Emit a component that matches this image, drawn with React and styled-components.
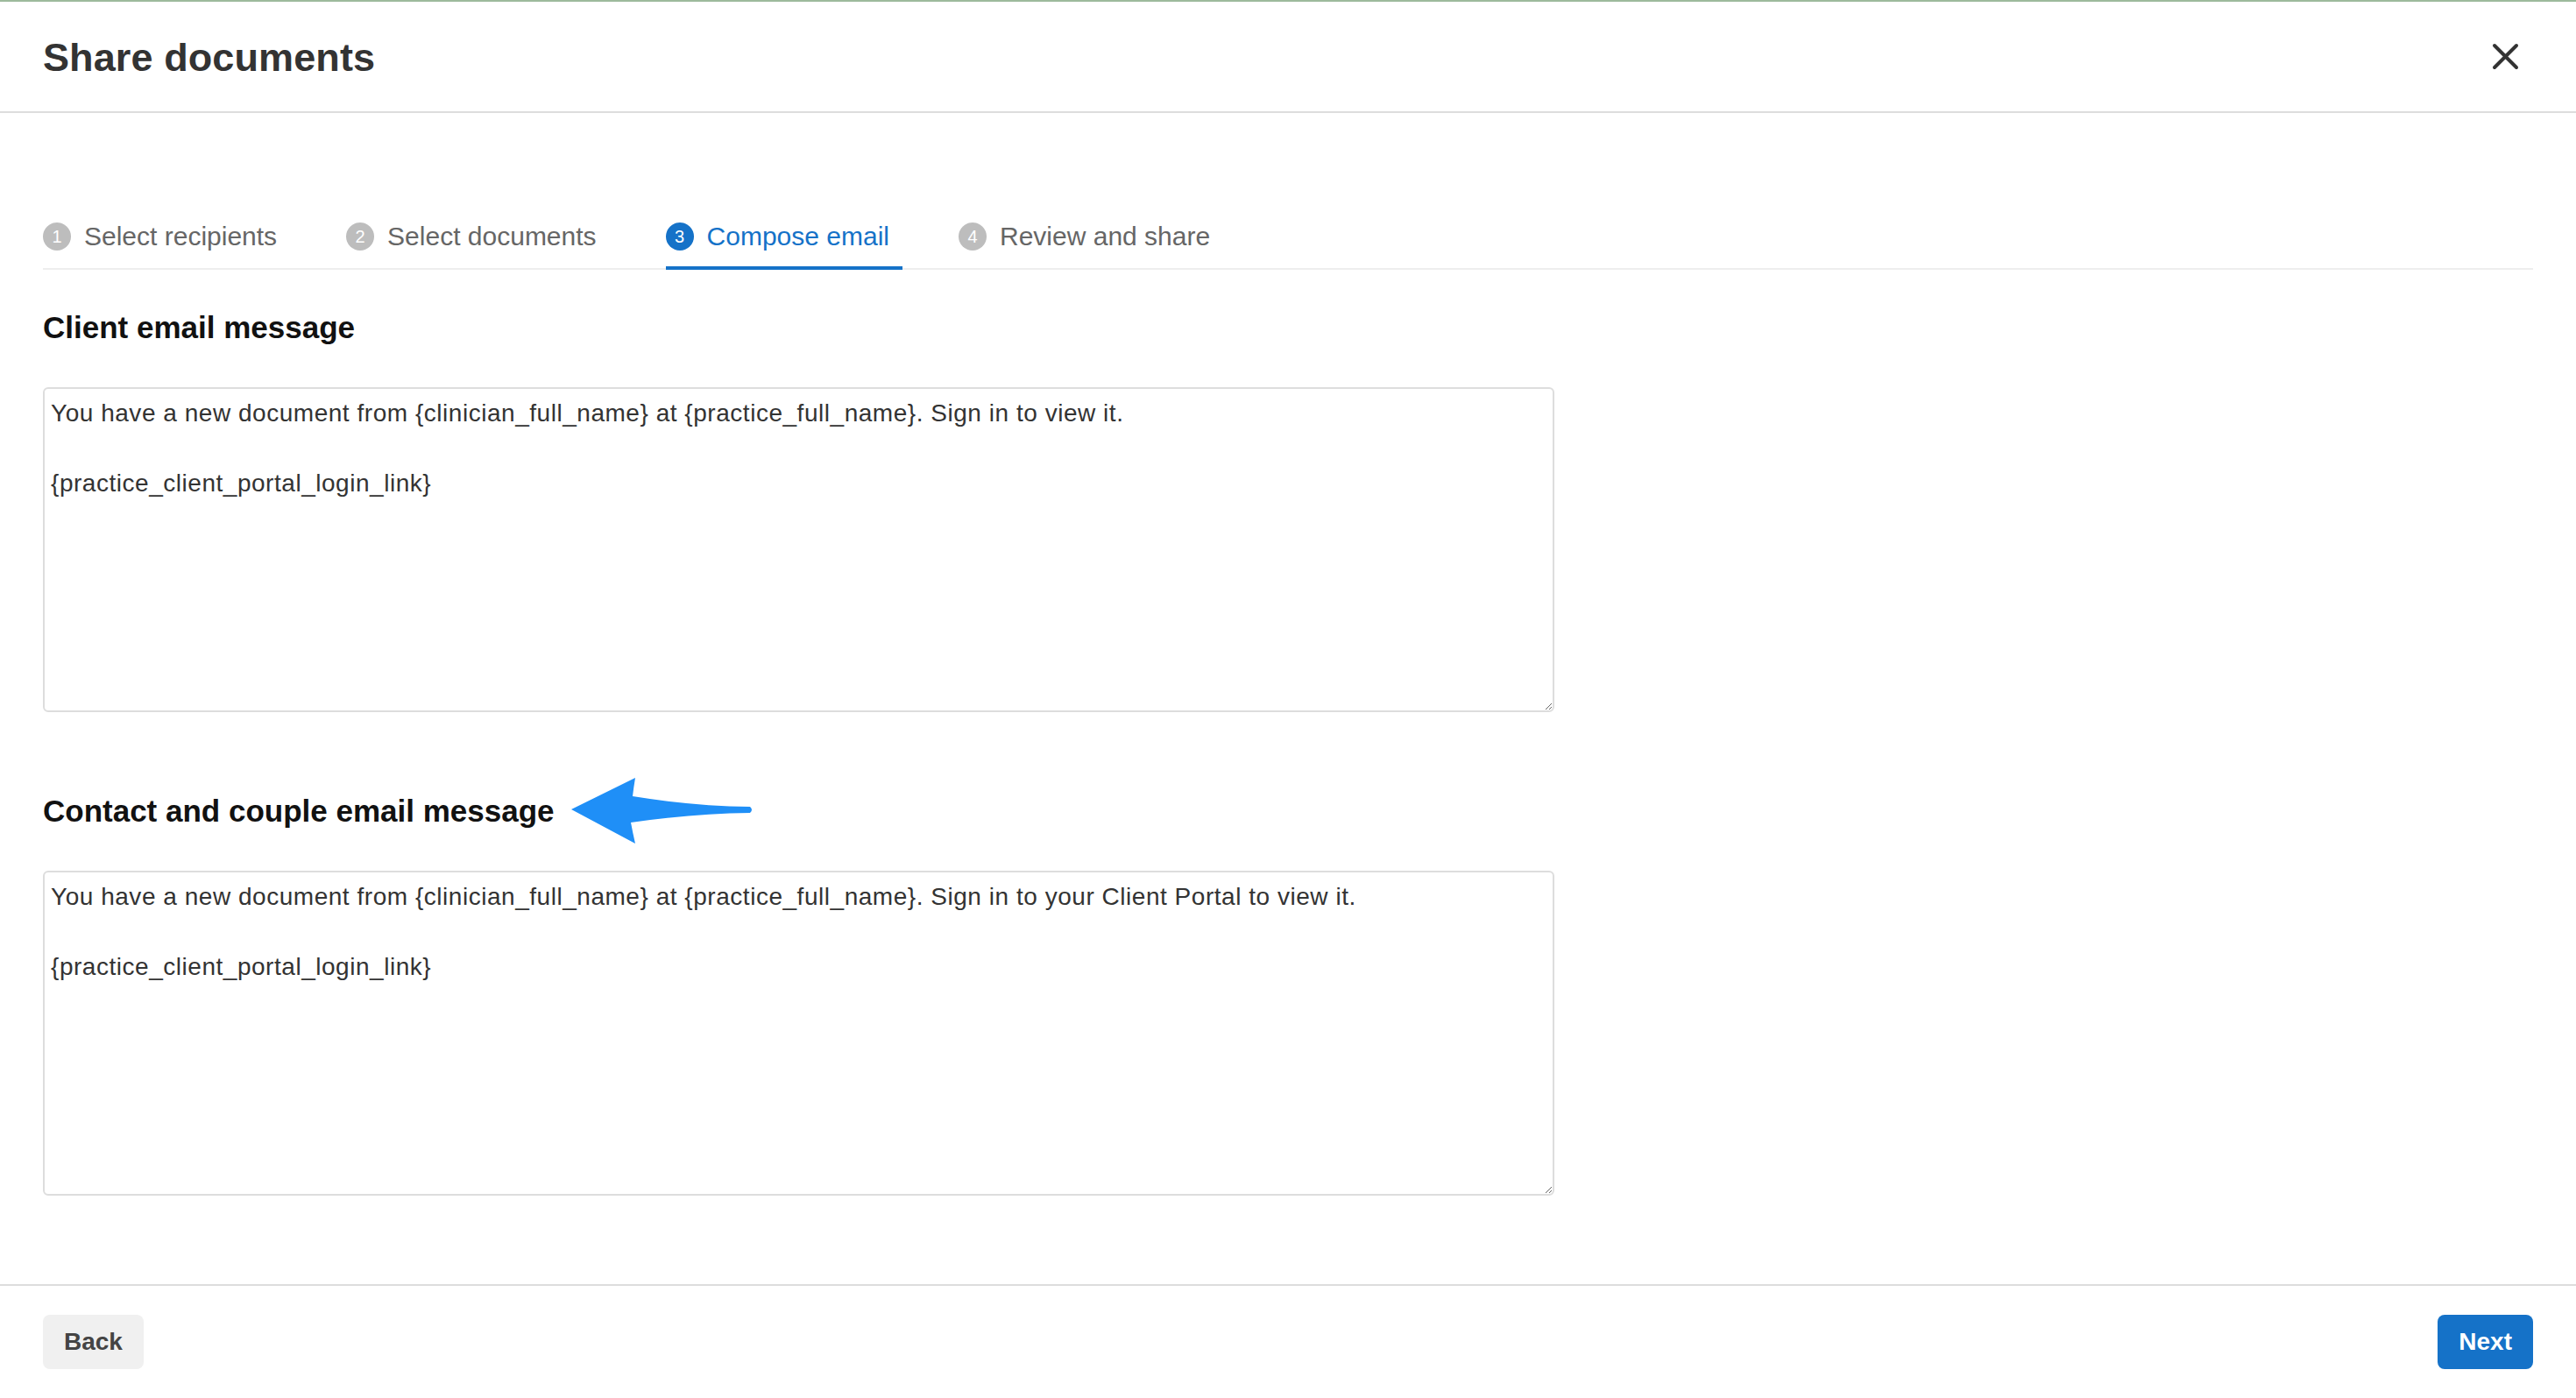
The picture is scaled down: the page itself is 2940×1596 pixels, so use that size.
import styled, { createGlobalStyle } from "styled-components"

const GlobalStyle = createGlobalStyle`
html, body {
    margin: 0;
    padding: 0;
    background: #ffffff;
}
body {
    font-family: 'Liberation Sans', Arial, sans-serif;
}
* {
    box-sizing: border-box;
}
`

const steps = ["Select recipients", "Select documents", "Compose email", "Review and share"]

const clientMessage = `You have a new document from {clinician_full_name} at {practice_full_name}. Sign in to view it.

{practice_client_portal_login_link}`

const contactMessage = `You have a new document from {clinician_full_name} at {practice_full_name}. Sign in to your Client Portal to view it.

{practice_client_portal_login_link}`

function CloseIcon() {
    return (
        <svg width="31" height="31" viewBox="0 0 31 31" fill="none">
            <path d="M3 3 L28 28 M28 3 L3 28" stroke="#333333" strokeWidth="4" strokeLinecap="round" />
        </svg>
    )
}

function PointerArrow() {
    // hand-drawn style annotation arrow, pointing left at the heading
    return (
        <svg width="212" height="80" viewBox="0 0 212 80">
            <path
                d="M3 38 L76 2 Q74 14 73 23 Q140 34 207 35 Q211 38.5 207 42 Q140 43 71 53 Q73 64 76 77 Z"
                fill="#1f8ff7"
            />
        </svg>
    )
}

export default function App() {
    const active = 2

    return (
        <StyledScreen>
            <GlobalStyle />

            <StyledHeader>
                <h1>Share documents</h1>
                <CloseButton aria-label="Close">
                    <CloseIcon />
                </CloseButton>
            </StyledHeader>

            <StyledBody>
                <StyledTabs>
                    {steps.map((label, idx) => (
                        <Tab key={label} $active={idx === active}>
                            <StepNumber $active={idx === active}>{idx + 1}</StepNumber>
                            <span>{label}</span>
                        </Tab>
                    ))}
                </StyledTabs>

                <SectionTitle $top={45}>Client email message</SectionTitle>
                <MessageBox defaultValue={clientMessage} />

                <SectionTitle $top={92}>
                    Contact and couple email message
                    <PointerArrow />
                </SectionTitle>
                <MessageBox defaultValue={contactMessage} />
            </StyledBody>

            <StyledFooter>
                <FooterButton>Back</FooterButton>
                <FooterButton $primary>Next</FooterButton>
            </StyledFooter>
        </StyledScreen>
    )
}

const StyledScreen = styled.div`
width: 100%;
height: 100vh;
display: flex;
flex-direction: column;
background: #ffffff;
`

const StyledHeader = styled.header`
height: 129px;
flex-shrink: 0;
padding: 0 49px;
border-top: 2px solid #9dba9c;
border-bottom: 2px solid #dddddd;

display: flex;
justify-content: space-between;
align-items: center;

h1 {
    margin: 2px 0 0 0;
    font-size: 45px;
    font-weight: 700;
    color: #333333;
    letter-spacing: 0.1px;
}
`

const CloseButton = styled.button`
border: none;
background: transparent;
padding: 0;
margin-right: 16px;
width: 31px;
height: 31px;
display: flex;
cursor: pointer;
`

const StyledBody = styled.main`
flex: 1;
padding: 0 49px;
display: flex;
flex-direction: column;
align-items: flex-start;
`

const StyledTabs = styled.nav`
width: 100%;
margin-top: 125px;
display: flex;
gap: 64px;
border-bottom: 2px solid #eeeeee;
`

const Tab = styled.div`
display: flex;
align-items: center;
gap: 15px;
padding: 0 15px 18px 0;
margin-bottom: -2px;
border-bottom: 4px solid ${p => (p.$active ? "#1572c8" : "transparent")};

span {
    font-size: 30px;
    line-height: 32px;
    color: ${p => (p.$active ? "#1572c8" : "#666666")};
}
`

const StepNumber = styled.div`
width: 32px;
height: 32px;
border-radius: 50%;
background: ${p => (p.$active ? "#1572c8" : "#bdbdbd")};
color: #ffffff;
font-size: 20px;
display: flex;
align-items: center;
justify-content: center;
`

const SectionTitle = styled.h2`
margin: ${p => p.$top}px 0 47px 0;
height: 42px;
font-size: 35px;
line-height: 42px;
font-weight: 700;
color: #111111;
display: flex;
align-items: center;
gap: 16px;

svg {
    flex-shrink: 0;
}
`

const MessageBox = styled.textarea`
width: 1725px;
height: 371px;
padding: 8px 7px;
border: 2px solid #dddddd;
border-radius: 6px;
font-family: 'Liberation Sans', Arial, sans-serif;
font-size: 28px;
letter-spacing: 0.53px;
line-height: 40px;
color: #333333;
outline: none;
resize: vertical;
`

const StyledFooter = styled.footer`
height: 130px;
flex-shrink: 0;
padding: 0 49px;
border-top: 2px solid #dddddd;
display: flex;
justify-content: space-between;
align-items: center;
`

const FooterButton = styled.button`
height: 62px;
padding: 0 24px;
border: none;
border-radius: 8px;
background: ${p => (p.$primary ? "#1572c8" : "#f0f0f0")};
color: ${p => (p.$primary ? "#ffffff" : "#444444")};
font-family: 'Liberation Sans', Arial, sans-serif;
font-size: 28px;
font-weight: 700;
cursor: pointer;
`
